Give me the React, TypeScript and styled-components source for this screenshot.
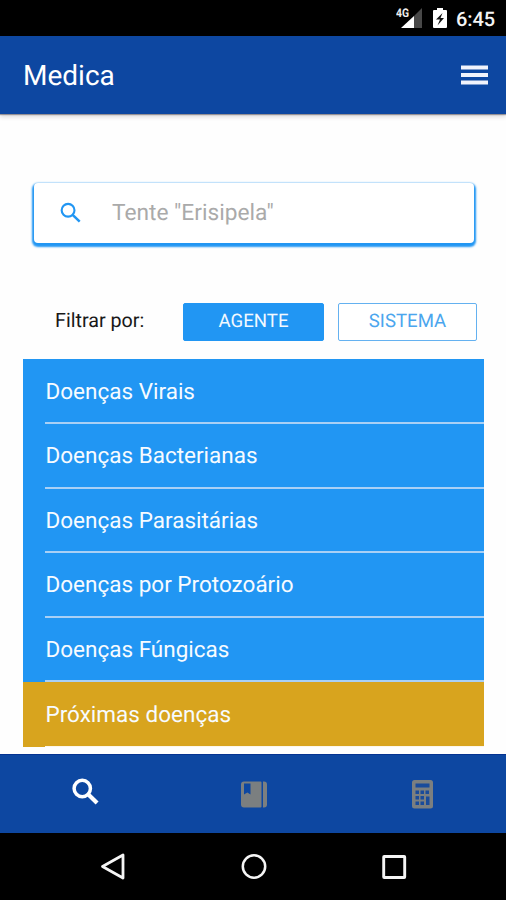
import React, { useState } from 'react';
import styled, { createGlobalStyle } from 'styled-components';

const GlobalStyle = createGlobalStyle`
  * { box-sizing: border-box; }
  body {
    margin: 0;
    background: #fefefe;
    font-family: Roboto, "Liberation Sans", sans-serif;
    text-rendering: geometricPrecision;
  }
`;

const Screen = styled.div`
  width: 506px;
  height: 900px;
  display: flex;
  flex-direction: column;
  overflow: hidden;
  background: #fefefe;
`;

const StatusBar = styled.div`
  height: 36px;
  flex: none;
  display: flex;
  justify-content: flex-end;
  align-items: flex-start;
  padding: 7px 11px 0 0;
  background: #000;
`;

const Clock = styled.span`
  width: 39px;
  margin-left: 9px;
  color: #f4f4f4;
  font-size: 20px;
  font-weight: 500;
  line-height: 24px;
  letter-spacing: -0.1px;
  white-space: nowrap;
`;

const Header = styled.header`
  height: 78px;
  flex: none;
  display: flex;
  align-items: center;
  justify-content: space-between;
  padding: 0 18px 0 23px;
  background: #0d47a1;
  box-shadow: 0 1px 1px rgba(60, 50, 60, 0.45), 0 3px 4px rgba(90, 80, 80, 0.2);
`;

const Title = styled.h1`
  margin: 1px 0 0;
  color: #fff;
  font-size: 28px;
  font-weight: 400;
  line-height: 32px;
`;

const IconButton = styled.button`
  display: flex;
  padding: 0;
  border: 0;
  background: none;
`;

const Content = styled.main`
  flex: 1;
  min-height: 0;
  display: flex;
  flex-direction: column;
`;

const SearchBox = styled.label`
  height: 60px;
  flex: none;
  margin: 69px 32px 0 34px;
  display: flex;
  align-items: center;
  gap: 30px;
  padding-left: 26px;
  border-radius: 4px;
  background: #fff;
  box-shadow: 0 2px 2px 2px #2196f3;
`;

const SearchInput = styled.input`
  width: 320px;
  height: 32px;
  padding: 0 0 1px;
  border: 0;
  outline: 0;
  background: none;
  font: 400 22.7px Roboto, sans-serif;
  text-rendering: geometricPrecision;
  &::placeholder { color: #aaa; opacity: 1; }
`;

const FilterRow = styled.div`
  flex: none;
  height: 38px;
  margin: 60px 29px 0 55px;
  display: flex;
  align-items: center;
`;

const FilterLabel = styled.span`
  width: 128px;
  flex: none;
  margin-top: -3px;
  color: #181818;
  font-size: 19.7px;
`;

const FilterButton = styled.button<{ $active: boolean }>`
  width: ${(p) => (p.$active ? 141 : 139)}px;
  height: 38px;
  padding: 0 0 3px;
  flex: none;
  border: 1px solid ${(p) => (p.$active ? '#2196f3' : '#64b1f0')};
  border-radius: 2px;
  background: ${(p) => (p.$active ? '#2196f3' : '#fff')};
  color: ${(p) => (p.$active ? '#f2f9ff' : '#4ba6ee')};
  font: 400 18.6px Roboto, sans-serif;
  text-rendering: geometricPrecision;
  & + & { margin-left: 14px; }
`;

const List = styled.ul`
  flex: none;
  margin: 18.4px 22px 0 23px;
  padding: 0;
  list-style: none;
`;

const Row = styled.li<{ $highlight?: boolean }>`
  height: 64.6px;
  padding-left: 22px;
  background: ${(p) => (p.$highlight ? '#d8a41e' : '#2196f3')};
`;

const RowText = styled.div<{ $highlight?: boolean }>`
  height: 100%;
  padding: 16.2px 0 0 0.5px;
  border-bottom: ${(p) => (p.$highlight ? '1px solid #fcf6ea' : '2px solid #a9d0f5')};
  color: #f7fbff;
  font-size: 22.5px;
  line-height: 32px;
  white-space: nowrap;
`;

const TabBar = styled.nav`
  height: 79px;
  flex: none;
  display: grid;
  grid-template-columns: repeat(3, 1fr);
  justify-items: center;
  align-items: center;
  padding-left: 2px;
  background: #0d47a1;
  border-top: 1px solid #053391;
`;

const SystemBar = styled.nav`
  height: 67px;
  flex: none;
  display: flex;
  align-items: center;
  justify-content: space-between;
  padding: 0 98px 0 99px;
  background: #000;
`;

const SearchIcon = ({ size, color, weight }: { size: number; color: string; weight: number }) => (
  <svg width={size} height={size} viewBox="0 0 24 24" fill="none" stroke={color} strokeWidth={weight}>
    <circle cx="8.8" cy="9" r="7" />
    <path d="M13.800 14l7.700 7.500" strokeWidth={weight * 1.2} />
  </svg>
);

const SignalIcon = () => (
  <svg width="27" height="24" viewBox="0 0 27 24">
    <path d="M26 1v20h-8V9z" fill="#484848" />
    <path d="M18 9v12H5z" fill="#fff" />
    <text x="0" y="10" fontFamily="Roboto" fontSize="12" fontWeight="700" fill="#eee" textLength="13" lengthAdjust="spacingAndGlyphs">4G</text>
  </svg>
);

const BatteryIcon = () => (
  <svg width="14" height="22" viewBox="0 0 14 22">
    <path d="M4 0h6v2h3q1 0 1 1v16q0 1-1 1H1q-1 0-1-1V3q0-1 1-1h3z" fill="#fff" />
    <path d="M9.500 5L3 11.500h4l-2.500 6 6.500-7.500H7.500z" fill="#111" />
  </svg>
);

const Battery = styled.span`
  display: flex;
  margin: 1px 0 0 10px;
`;

const MenuIcon = () => (
  <svg width="27" height="20" viewBox="0 0 27 20" fill="#f0f3fc">
    <rect y="0.500" width="27" height="4" />
    <rect y="8" width="27" height="4" />
    <rect y="15.500" width="27" height="4" />
  </svg>
);

const BookIcon = () => (
  <svg width="26" height="27" viewBox="0 0 26 27" fill="#7b7f80">
    <path
      fillRule="evenodd"
      d="M3 0.500h16.500q1 0 1 1v24q0 1-1 1H3q-3 0-3-3v-20q0-3 3-3zM3 2.500v11l3.300-2 3.200 2v-11z"
    />
    <path d="M22 0.500h1q3 0 3 3v20q0 3-3 3h-1z" />
  </svg>
);

const CALC_KEYS = [[4, 10.5], [9, 10.5], [14, 10.5], [4, 16], [9, 16], [4, 21.5], [9, 21.5]];

const CalculatorIcon = () => (
  <svg width="21" height="29" viewBox="0 0 21 29">
    <rect width="21" height="28.5" rx="2.500" fill="#7b7f80" />
    <g fill="#194b9b">
      <rect x="3.500" y="3.500" width="14" height="4" />
      {CALC_KEYS.map(([x, y]) => <rect key={`${x}-${y}`} x={x - 0.5} y={y} width="3.500" height="3.500" />)}
      <rect x="14" y="16.500" width="3.500" height="8.500" />
    </g>
  </svg>
);

const TabItem = styled.button<{ $shiftY: number }>`
  display: flex;
  padding: 0;
  margin-top: ${(p) => p.$shiftY}px;
  border: 0;
  background: none;
`;

const BackIcon = () => (
  <svg width="28" height="30" viewBox="0 0 28 30" fill="none" stroke="#f5f5f5" strokeWidth="2.800" strokeLinejoin="round">
    <path d="M3.500 14.500L24 3v23z" />
  </svg>
);

const HomeIcon = () => (
  <svg width="28" height="30" viewBox="0 0 28 30" fill="none" stroke="#f5f5f5" strokeWidth="2.500">
    <circle cx="14" cy="14.500" r="11.200" />
  </svg>
);

const RecentsIcon = () => (
  <svg width="28" height="30" viewBox="0 0 28 30" fill="none" stroke="#f5f5f5" strokeWidth="2.900" strokeLinejoin="round">
    <rect x="3.700" y="4.500" width="21" height="21" rx="0.500" />
  </svg>
);

const CATEGORIES = [
  'Doenças Virais',
  'Doenças Bacterianas',
  'Doenças Parasitárias',
  'Doenças por Protozoário',
  'Doenças Fúngicas',
];

export default function App() {
  const [filter, setFilter] = useState('AGENTE');
  return (
    <>
      <GlobalStyle />
      <Screen>
        <StatusBar>
          <SignalIcon />
          <Battery><BatteryIcon /></Battery>
          <Clock>6:45</Clock>
        </StatusBar>
        <Header>
          <Title>Medica</Title>
          <IconButton aria-label="Menu"><MenuIcon /></IconButton>
        </Header>
        <Content>
          <SearchBox>
            <SearchIcon size={22} color="#2196f3" weight={2.3} />
            <SearchInput placeholder={'Tente "Erisipela"'} />
          </SearchBox>
          <FilterRow>
            <FilterLabel>Filtrar por:</FilterLabel>
            {['AGENTE', 'SISTEMA'].map((name) => (
              <FilterButton key={name} $active={filter === name} onClick={() => setFilter(name)}>
                {name}
              </FilterButton>
            ))}
          </FilterRow>
          <List>
            {CATEGORIES.map((name) => (
              <Row key={name}><RowText>{name}</RowText></Row>
            ))}
            <Row $highlight><RowText $highlight>Próximas doenças</RowText></Row>
          </List>
        </Content>
        <TabBar>
          <TabItem $shiftY={-5} aria-label="Buscar"><SearchIcon size={28} color="#fff" weight={3} /></TabItem>
          <TabItem $shiftY={0} aria-label="Livro"><BookIcon /></TabItem>
          <TabItem $shiftY={0} aria-label="Calculadora"><CalculatorIcon /></TabItem>
        </TabBar>
        <SystemBar>
          <BackIcon />
          <HomeIcon />
          <RecentsIcon />
        </SystemBar>
      </Screen>
    </>
  );
}
